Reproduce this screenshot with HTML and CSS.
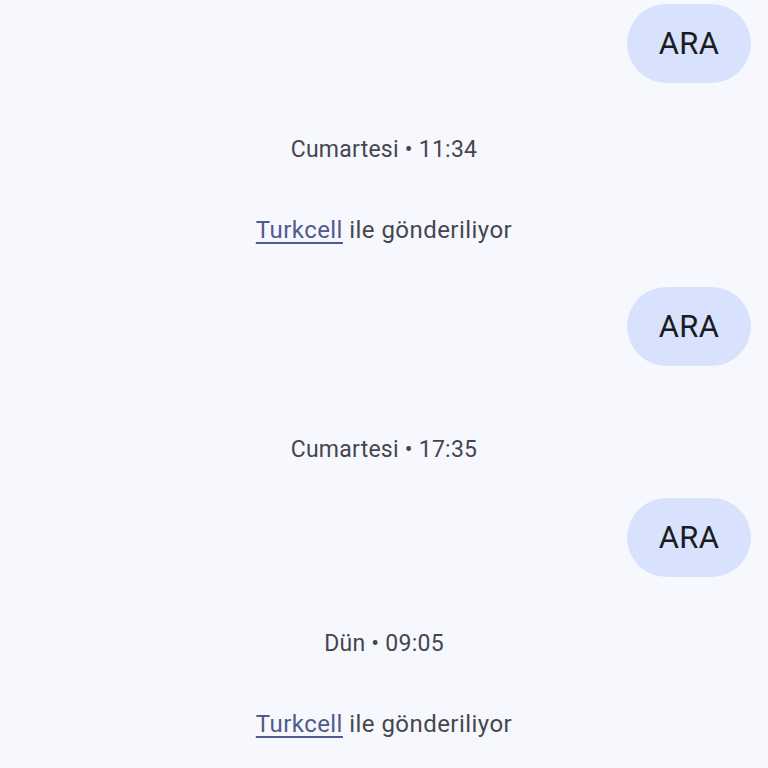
FILE: index.html
```html
<!DOCTYPE html>
<html lang="tr">
<head>
<meta charset="utf-8">
<link rel="stylesheet" href="styles.css">
</head>
<body>
<main class="thread">
  <div class="row out"><div class="bubble">ARA</div></div>
  <div class="meta gap-a">Cumartesi • 11:34</div>
  <div class="meta sent gap-s"><a class="carrier" href="#">Turkcell</a> ile gönderiliyor</div>
  <div class="row out gap-b"><div class="bubble">ARA</div></div>
  <div class="meta gap-c">Cumartesi • 17:35</div>
  <div class="row out gap-d"><div class="bubble">ARA</div></div>
  <div class="meta gap-a">Dün • 09:05</div>
  <div class="meta sent gap-s"><a class="carrier" href="#">Turkcell</a> ile gönderiliyor</div>
</main>
</body>
</html>
```
FILE: styles.css
```css
html, body {
  margin: 0;
  background: #f7f8fe;
}
body {
  width: 768px;
  height: 768px;
  overflow: hidden;
  font-family: Roboto, "Noto Sans", sans-serif;
}
.thread {
  display: flex;
  flex-direction: column;
  padding-top: 4px;
}
.row.out {
  display: flex;
  justify-content: flex-end;
  padding-right: 17px;
}
.bubble {
  width: 124px;
  height: 79px;
  border-radius: 40px;
  background: #d9e2fd;
  color: #1b1c22;
  font-size: 31px;
  letter-spacing: 0.3px;
  display: flex;
  align-items: center;
  justify-content: center;
}
.meta {
  text-align: center;
  line-height: 30px;
  font-size: 23px;
  letter-spacing: 0.25px;
  color: #45464f;
  padding-top: 1px;
}
.sent {
  font-size: 24px;
  letter-spacing: 0.45px;
  padding-top: 0;
}
.carrier {
  color: #505b8c;
  text-decoration: underline;
  text-underline-offset: 4px;
  text-decoration-thickness: 2px;
}
.gap-a { margin-top: 51px; }
.gap-s { margin-top: 50px; }
.gap-b { margin-top: 42px; }
.gap-c { margin-top: 68px; }
.gap-d { margin-top: 33px; }
```
